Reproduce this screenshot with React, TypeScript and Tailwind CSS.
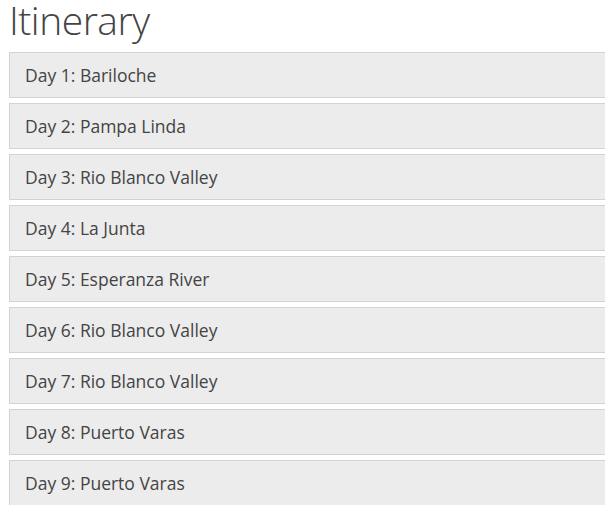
const days = [
  "Day 1: Bariloche",
  "Day 2: Pampa Linda",
  "Day 3: Rio Blanco Valley",
  "Day 4: La Junta",
  "Day 5: Esperanza River",
  "Day 6: Rio Blanco Valley",
  "Day 7: Rio Blanco Valley",
  "Day 8: Puerto Varas",
  "Day 9: Puerto Varas",
];

export default function App() {
  return (
    <div className="w-[605px] h-[505px] overflow-hidden bg-white font-['Open_Sans',sans-serif] text-[#444]">
      <div className="h-[52px] pl-[9px]">
        <h1 className="text-[39px] font-light leading-[40px] tracking-[-0.5px]">Itinerary</h1>
      </div>
      <div className="ml-[9px] w-[620px] flex flex-col gap-[5px]">
        {days.map((d) => (
          <div
            key={d}
            className="h-[46px] border border-[#d3d3d3] bg-[#ececec] pl-[15px] flex items-center text-[17.5px]"
          >
            {d}
          </div>
        ))}
      </div>
    </div>
  );
}
